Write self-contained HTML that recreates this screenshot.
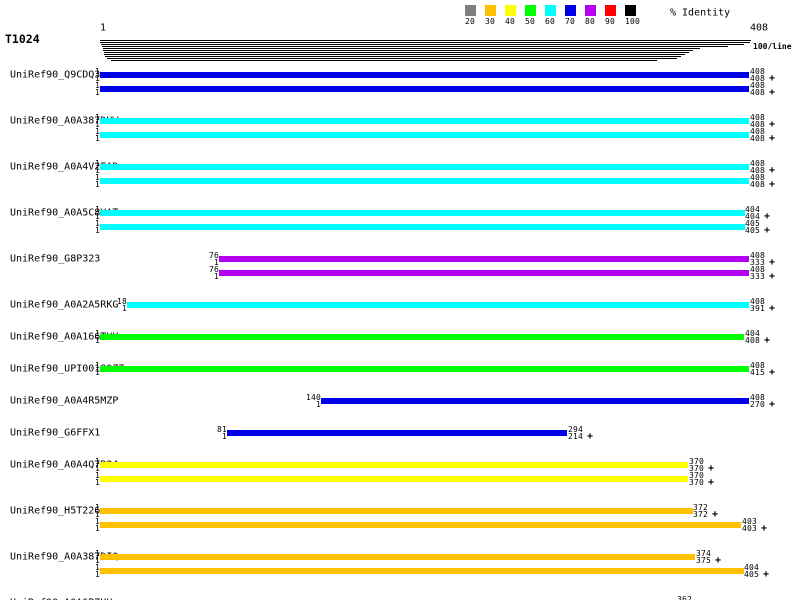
<!DOCTYPE html>
<html><head><meta charset="utf-8"><style>
html,body{margin:0;padding:0;background:#fff;width:800px;height:600px;overflow:hidden}
svg{display:block}
text{font-family:"DejaVu Sans Mono","Liberation Mono",monospace;fill:#000}
.l{font-size:10px}
.s{font-size:8px;letter-spacing:.2px}
.e{text-anchor:end}
.p{font-size:10px;letter-spacing:0;font-weight:bold}
.t{font-size:11.5px;font-weight:bold}
</style></head><body>
<svg width="800" height="600" viewBox="0 0 800 600" xmlns="http://www.w3.org/2000/svg">
<rect x="465" y="5" width="11" height="11" fill="#808080"/><rect x="485" y="5" width="11" height="11" fill="#ffc000"/><rect x="505" y="5" width="11" height="11" fill="#ffff00"/><rect x="525" y="5" width="11" height="11" fill="#00ff00"/><rect x="545" y="5" width="11" height="11" fill="#00ffff"/><rect x="565" y="5" width="11" height="11" fill="#0000e6"/><rect x="585" y="5" width="11" height="11" fill="#b400f0"/><rect x="605" y="5" width="11" height="11" fill="#ff0000"/><rect x="625" y="5" width="11" height="11" fill="#000"/>
<g class="s"><text x="465" y="24">20</text><text x="485" y="24">30</text><text x="505" y="24">40</text><text x="525" y="24">50</text><text x="545" y="24">60</text><text x="565" y="24">70</text><text x="585" y="24">80</text><text x="605" y="24">90</text><text x="625" y="24">100</text></g>
<text class="l" x="670" y="15.5">% Identity</text>
<text class="l" x="100" y="30.5">1</text><text class="l" x="750" y="30.5">408</text>
<text class="t" x="5" y="43">T1024</text>
<text class="s" x="753" y="49" style="letter-spacing:0;font-weight:bold">100/line</text>
<g fill="#000">
<rect x="100" y="40" width="651" height="1"/><rect x="100" y="42" width="650" height="1"/><rect x="101" y="44" width="643" height="1"/><rect x="102" y="46" width="626" height="1"/><rect x="103" y="48" width="597" height="1"/><rect x="103" y="50" width="590" height="1"/><rect x="104" y="52" width="585" height="1"/><rect x="104" y="54" width="581" height="1"/><rect x="105" y="56" width="576" height="1"/><rect x="107" y="58" width="570" height="1"/><rect x="111" y="60" width="546" height="1"/>
</g>
<g class="l">
<text x="10" y="77.5">UniRef90_Q9CDQ3</text>
<text x="10" y="123.5">UniRef90_A0A387DUW</text>
<text x="10" y="169.5">UniRef90_A0A4V2FAD</text>
<text x="10" y="215.5">UniRef90_A0A5C8VAT</text>
<text x="10" y="261.5">UniRef90_G8P323</text>
<text x="10" y="307.5">UniRef90_A0A2A5RKG</text>
<text x="10" y="339.5">UniRef90_A0A166TUU</text>
<text x="10" y="371.5">UniRef90_UPI00189Z7</text>
<text x="10" y="403.5">UniRef90_A0A4R5MZP</text>
<text x="10" y="435.5">UniRef90_G6FFX1</text>
<text x="10" y="467.5">UniRef90_A0A4Q7B24</text>
<text x="10" y="513.5">UniRef90_H5T226</text>
<text x="10" y="559.5">UniRef90_A0A387DIQ</text>
<text x="10" y="605.5">UniRef90_A0A6P7UU</text>
</g>
<rect x="100" y="72" width="649" height="6" fill="#0000e6"/><rect x="100" y="86" width="649" height="6" fill="#0000e6"/>
<rect x="100" y="118" width="649" height="6" fill="#00ffff"/><rect x="100" y="132" width="649" height="6" fill="#00ffff"/>
<rect x="100" y="164" width="649" height="6" fill="#00ffff"/><rect x="100" y="178" width="649" height="6" fill="#00ffff"/>
<rect x="100" y="210" width="645" height="6" fill="#00ffff"/><rect x="100" y="224" width="645" height="6" fill="#00ffff"/>
<rect x="219" y="256" width="530" height="6" fill="#b400f0"/><rect x="219" y="270" width="530" height="6" fill="#b400f0"/>
<rect x="127" y="302" width="622" height="6" fill="#00ffff"/>
<rect x="100" y="334" width="644" height="6" fill="#00ff00"/>
<rect x="100" y="366" width="649" height="6" fill="#00ff00"/>
<rect x="321" y="398" width="428" height="6" fill="#0000e6"/>
<rect x="227" y="430" width="340" height="6" fill="#0000e6"/>
<rect x="100" y="462" width="588" height="6" fill="#ffff00"/><rect x="100" y="476" width="588" height="6" fill="#ffff00"/>
<rect x="100" y="508" width="593" height="6" fill="#ffc000"/><rect x="100" y="522" width="641" height="6" fill="#ffc000"/>
<rect x="100" y="554" width="595" height="6" fill="#ffc000"/><rect x="100" y="568" width="644" height="6" fill="#ffc000"/>
<g class="s e">
<text x="100" y="74">1</text><text x="100" y="81">1</text><text x="100" y="88">1</text><text x="100" y="95">1</text>
<text x="100" y="120">1</text><text x="100" y="127">1</text><text x="100" y="134">1</text><text x="100" y="141">1</text>
<text x="100" y="166">1</text><text x="100" y="173">1</text><text x="100" y="180">1</text><text x="100" y="187">1</text>
<text x="100" y="212">1</text><text x="100" y="219">1</text><text x="100" y="226">1</text><text x="100" y="233">1</text>
<text x="219" y="258">76</text><text x="219" y="265">1</text><text x="219" y="272">76</text><text x="219" y="279">1</text>
<text x="127" y="304">18</text><text x="127" y="311">1</text>
<text x="100" y="336">1</text><text x="100" y="343">1</text>
<text x="100" y="368">1</text><text x="100" y="375">1</text>
<text x="321" y="400">140</text><text x="321" y="407">1</text>
<text x="227" y="432">81</text><text x="227" y="439">1</text>
<text x="100" y="464">1</text><text x="100" y="471">1</text><text x="100" y="478">1</text><text x="100" y="485">1</text>
<text x="100" y="510">1</text><text x="100" y="517">1</text><text x="100" y="524">1</text><text x="100" y="531">1</text>
<text x="100" y="556">1</text><text x="100" y="563">1</text><text x="100" y="570">1</text><text x="100" y="577">1</text>
</g>
<g class="s">
<text x="750" y="74">408</text><text x="750" y="81">408</text><text class="p" x="769" y="81">+</text><text x="750" y="88">408</text><text x="750" y="95">408</text><text class="p" x="769" y="95">+</text>
<text x="750" y="120">408</text><text x="750" y="127">408</text><text class="p" x="769" y="127">+</text><text x="750" y="134">408</text><text x="750" y="141">408</text><text class="p" x="769" y="141">+</text>
<text x="750" y="166">408</text><text x="750" y="173">408</text><text class="p" x="769" y="173">+</text><text x="750" y="180">408</text><text x="750" y="187">408</text><text class="p" x="769" y="187">+</text>
<text x="745" y="212">404</text><text x="745" y="219">404</text><text class="p" x="764" y="219">+</text><text x="745" y="226">405</text><text x="745" y="233">405</text><text class="p" x="764" y="233">+</text>
<text x="750" y="258">408</text><text x="750" y="265">333</text><text class="p" x="769" y="265">+</text><text x="750" y="272">408</text><text x="750" y="279">333</text><text class="p" x="769" y="279">+</text>
<text x="750" y="304">408</text><text x="750" y="311">391</text><text class="p" x="769" y="311">+</text>
<text x="745" y="336">404</text><text x="745" y="343">408</text><text class="p" x="764" y="343">+</text>
<text x="750" y="368">408</text><text x="750" y="375">415</text><text class="p" x="769" y="375">+</text>
<text x="750" y="400">408</text><text x="750" y="407">270</text><text class="p" x="769" y="407">+</text>
<text x="568" y="432">294</text><text x="568" y="439">214</text><text class="p" x="587" y="439">+</text>
<text x="689" y="464">370</text><text x="689" y="471">370</text><text class="p" x="708" y="471">+</text><text x="689" y="478">370</text><text x="689" y="485">370</text><text class="p" x="708" y="485">+</text>
<text x="693" y="510">372</text><text x="693" y="517">372</text><text class="p" x="712" y="517">+</text><text x="742" y="524">403</text><text x="742" y="531">403</text><text class="p" x="761" y="531">+</text>
<text x="696" y="556">374</text><text x="696" y="563">375</text><text class="p" x="715" y="563">+</text><text x="744" y="570">404</text><text x="744" y="577">405</text><text class="p" x="763" y="577">+</text>
<text x="677" y="602">362</text>
</g>
</svg>
</body></html>
